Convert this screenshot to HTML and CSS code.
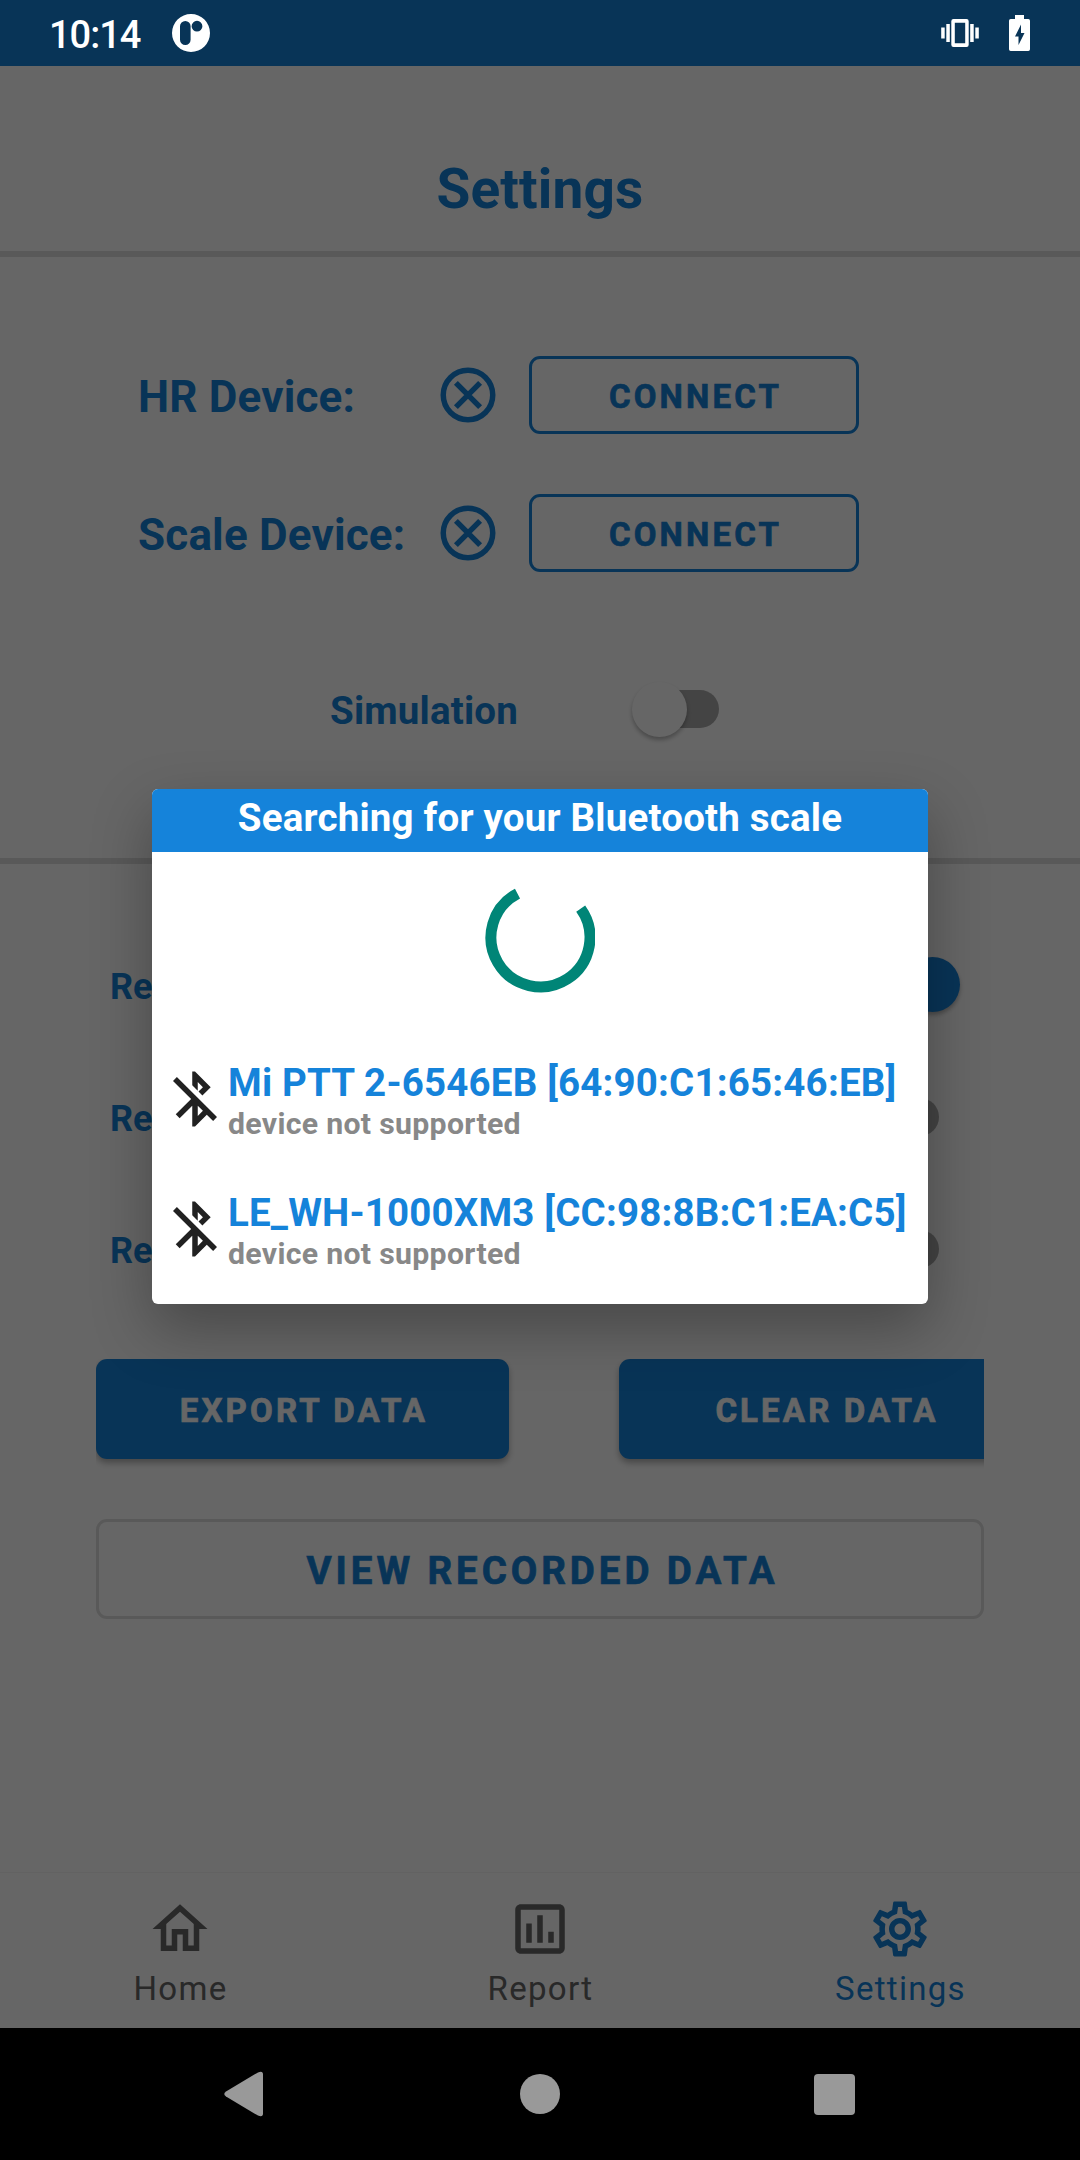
FILE: index.html
```html
<!DOCTYPE html>
<html lang="en">
<head>
<meta charset="utf-8">
<title>Settings</title>
<link rel="stylesheet" href="styles.css">
</head>
<body>
<div class="phone">
  <header class="status">
    <span class="clock">10:14</span>
    <svg class="app-mark" viewBox="0 0 38 38"><path fill="#fff" fill-rule="evenodd" d="M19 0a19 19 0 1 0 0 38a19 19 0 1 0 0-38zM13.3 7a5.3 5.3 0 0 1 5.3 5.3v13.4a5.3 5.3 0 0 1-10.6 0V12.300a5.300 5.300 0 0 1 5.300-5.300zM25 6.800a5.400 5.400 0 1 1 0 10.800a5.400 5.400 0 1 1 0-10.800z"/></svg>
    <svg class="vibrate" viewBox="0 0 40 30" fill="#fff"><rect x="1.200" y="9.500" width="3.500" height="11"/><rect x="6.300" y="6" width="3.500" height="18"/><path fill-rule="evenodd" d="M13.500 1h13a2.200 2.200 0 0 1 2.200 2.200v23.600a2.200 2.200 0 0 1-2.200 2.200h-13a2.200 2.200 0 0 1-2.200-2.200v-23.600A2.200 2.200 0 0 1 13.500 1zM14.800 4.700v20.600h10.400V4.700z"/><rect x="30.200" y="6" width="3.500" height="18"/><rect x="35.300" y="9.500" width="3.500" height="11"/></svg>
    <svg class="battery" viewBox="0 0 21 36"><path fill="#fff" fill-rule="evenodd" d="M6 0h9v4h4.300q1.700 0 1.700 1.700v28.600q0 1.700-1.700 1.700H1.700Q0 36 0 34.300V5.700Q0 4 1.700 4H6zM12 9.500L6 21.500h3.500v8.500L15.500 18H12z"/></svg>
  </header>

  <main class="app">
    <div class="title-bar"><h1>Settings</h1></div>

    <section class="devices">
      <div class="device-row">
        <span class="device-label">HR Device:</span>
        <svg class="icon24" viewBox="0 0 24 24" fill="none" stroke="currentColor" stroke-width="2"><circle cx="12" cy="12" r="9"/><path d="M7.600 7.600l8.800 8.800M16.400 7.600l-8.800 8.800"/></svg>
        <button class="btn outline">CONNECT</button>
      </div>
      <div class="device-row">
        <span class="device-label">Scale Device:</span>
        <svg class="icon24" viewBox="0 0 24 24" fill="none" stroke="currentColor" stroke-width="2"><circle cx="12" cy="12" r="9"/><path d="M7.600 7.600l8.800 8.800M16.400 7.600l-8.800 8.800"/></svg>
        <button class="btn outline">CONNECT</button>
      </div>
      <div class="simulation">
        <span class="sim-label">Simulation</span>
        <span class="switch"><span class="thumb"></span></span>
      </div>
    </section>

    <section class="records">
      <div class="record-row"><span class="record-label">Re</span><span class="switch on"><span class="thumb"></span></span></div>
      <div class="record-row"><span class="record-label">Re</span><span class="switch"><span class="thumb"></span></span></div>
      <div class="record-row"><span class="record-label">Re</span><span class="switch"><span class="thumb"></span></span></div>
      <div class="actions">
        <button class="btn filled">EXPORT DATA</button>
        <button class="btn filled">CLEAR DATA</button>
      </div>
      <button class="btn view">VIEW RECORDED DATA</button>
    </section>

    <nav class="tabs">
      <div class="tab">
        <svg class="icon24" viewBox="0 0 24 24" fill="currentColor"><path d="M12 5.690l5 4.500V18h-2v-6H9v6H7v-7.810l5-4.500M12 3L2 12h3v8h6v-6h2v6h6v-8h3L12 3z"/></svg>
        <span>Home</span>
      </div>
      <div class="tab">
        <svg class="icon24" viewBox="0 0 24 24" fill="currentColor"><path d="M19 3H5c-1.100 0-2 .9-2 2v14c0 1.100.9 2 2 2h14c1.100 0 2-.9 2-2V5c0-1.100-.9-2-2-2zm0 16H5V5h14v14zM7 10h2v7H7zm4-3h2v10h-2zm4 6h2v4h-2z"/></svg>
        <span>Report</span>
      </div>
      <div class="tab active">
        <svg class="icon24" viewBox="0 0 24 24" fill="currentColor"><path d="M19.430 12.980c.04-.32.070-.64.070-.98 0-.34-.03-.66-.07-.98l2.110-1.650c.19-.15.24-.42.120-.64l-2-3.460c-.09-.16-.26-.25-.44-.25-.06 0-.12.010-.17.030l-2.490 1c-.52-.4-1.080-.73-1.690-.98l-.38-2.650C14.460 2.180 14.250 2 14 2h-4c-.25 0-.46.180-.49.420l-.38 2.650c-.61.250-1.170.590-1.690.980l-2.490-1c-.06-.02-.12-.03-.18-.03-.17 0-.34.090-.43.250l-2 3.460c-.13.220-.07.490.120.640l2.110 1.650c-.04.320-.07.650-.07.980 0 .330.030.660.070.980l-2.110 1.650c-.19.150-.24.420-.12.640l2 3.460c.09.160.26.250.440.250.06 0 .120-.01.170-.03l2.490-1c.52.400 1.080.730 1.690.980l.38 2.650c.03.240.240.420.490.420h4c.25 0 .460-.18.490-.42l.38-2.650c.61-.25 1.170-.59 1.690-.98l2.490 1c.06.020.120.030.180.030.17 0 .340-.09.430-.25l2-3.460c.12-.22.070-.49-.12-.64l-2.110-1.650zM17.450 11.270c.04.310.050.520.050.730 0 .210-.02.430-.05.730l-.14 1.130.89.700 1.080.840-.7 1.210-1.270-.51-1.040-.42-.9.680c-.43.320-.84.560-1.250.730l-1.060.430-.16 1.130-.2 1.350h-1.400l-.19-1.350-.16-1.130-1.060-.43c-.43-.18-.83-.41-1.230-.71l-.91-.7-1.060.430-1.270.510-.7-1.210 1.080-.84.890-.7-.14-1.130c-.03-.31-.05-.54-.05-.74s.02-.43.050-.73l.14-1.130-.89-.7-1.080-.84.700-1.210 1.270.510 1.040.420.900-.68c.43-.32.840-.56 1.250-.73l1.060-.43.160-1.130.2-1.350h1.390l.19 1.350.160 1.130 1.060.430c.43.180.830.410 1.230.710l.91.700 1.060-.43 1.270-.51.700 1.210-1.070.850-.89.700.14 1.130zM12 8c-2.210 0-4 1.790-4 4s1.790 4 4 4 4-1.790 4-4-1.790-4-4-4zm0 6c-1.100 0-2-.9-2-2s.9-2 2-2 2 .9 2 2-.9 2-2 2z" fill-rule="evenodd"/></svg>
        <span>Settings</span>
      </div>
    </nav>

    <div class="scrim">
      <div class="dialog">
        <h2>Searching for your Bluetooth scale</h2>
        <svg class="spinner" viewBox="0 0 110 110"><path d="M95.700 25.600A49.500 49.500 0 1 1 32.500 10.600" fill="none" stroke="#008577" stroke-width="11"/></svg>
        <ul class="found">
          <li>
            <svg class="icon24" viewBox="0 0 24 24" fill="currentColor"><path d="M13 5.830l1.880 1.880-1.600 1.600 1.410 1.410 3.020-3.020L12 2h-1v5.030l2 2v-3.200zM5.410 4L4 5.410 10.590 12 5 17.590 6.410 19 11 14.410V22h1l4.290-4.290 2.300 2.290L20 18.590 5.410 4zM13 18.170v-3.760l1.880 1.880L13 18.170z"/></svg>
            <div><p class="name">Mi PTT 2-6546EB [64:90:C1:65:46:EB]</p><p class="note">device not supported</p></div>
          </li>
          <li>
            <svg class="icon24" viewBox="0 0 24 24" fill="currentColor"><path d="M13 5.830l1.880 1.880-1.600 1.600 1.410 1.410 3.020-3.020L12 2h-1v5.030l2 2v-3.200zM5.410 4L4 5.410 10.590 12 5 17.590 6.410 19 11 14.410V22h1l4.290-4.290 2.300 2.290L20 18.590 5.410 4zM13 18.170v-3.760l1.880 1.880L13 18.170z"/></svg>
            <div><p class="name">LE_WH-1000XM3 [CC:98:8B:C1:EA:C5]</p><p class="note">device not supported</p></div>
          </li>
        </ul>
      </div>
    </div>
  </main>

  <footer class="sysnav">
    <svg class="back" viewBox="0 0 40 46"><path fill="#999" d="M2 20.500L34 1.400Q39 -.5 39 3.500V42.500Q39 46.500 34 44.600L2 25.500Q-1.500 23 2 20.500z"/></svg>
    <span class="home"></span>
    <span class="recent"></span>
  </footer>
</div>
</body>
</html>
```
FILE: styles.css
```css
* { box-sizing: border-box; }
body { margin: 0; font-family: Roboto, sans-serif; }
h1, h2, p, ul { margin: 0; padding: 0; }
button { font-family: inherit; }

.phone { width: 1080px; height: 2160px; display: flex; flex-direction: column; overflow: hidden; }

.status { height: 66px; background: #083457; display: flex; align-items: center; padding: 0 50px 0 49px; flex: none; }
.clock { color: #fff; font-size: 38px; font-weight: 500; line-height: 40px; width: 123px; letter-spacing: -1px; padding-top: 3px; }
.app-mark { width: 38px; height: 38px; }
.vibrate { width: 40px; height: 30px; margin-left: auto; }
.battery { width: 21px; height: 36px; margin-left: 29px; }

.app { position: relative; flex: 1; min-height: 0; background: #fff; color: #1583da; display: flex; flex-direction: column; }
.icon24 { width: 66px; height: 66px; flex: none; display: block; }

.title-bar { height: 191px; border-bottom: 6px solid #dedede; padding-top: 91px; text-align: center; }
.title-bar h1 { font-size: 55px; line-height: 64px; font-weight: 700; letter-spacing: 0.15px; }

.devices { height: 607px; border-bottom: 6px solid #dedede; padding-top: 99px; }
.device-row { height: 78px; margin-bottom: 60px; padding-left: 138px; display: flex; align-items: center; }
.device-label { width: 297px; font-size: 44px; font-weight: 700; padding-top: 4px; white-space: nowrap; letter-spacing: 0.18px; }
.btn { border: 0; padding: 2px 0 0 3px; font-size: 33px; font-weight: 700; letter-spacing: 3.15px; color: inherit; border-radius: 11px; background: none; white-space: nowrap; -webkit-text-stroke: 0.7px currentColor; }
.outline { width: 330px; height: 78px; margin-left: 28px; border: 3px solid #1583da; }

.simulation { height: 56px; margin-top: 109px; padding: 0 361px 0 330px; display: flex; align-items: center; justify-content: space-between; font-size: 38.5px; font-weight: 700; letter-spacing: 0.18px; }
.sim-label { padding-top: 2px; }
.switch { width: 76px; height: 38px; border-radius: 19px; background: #aaa; display: flex; align-items: center; flex: none; }
.thumb { width: 55px; height: 55px; border-radius: 50%; background: #fff; margin-left: -11px; flex: none; box-shadow: 0 3px 4px rgba(0,0,0,.28); }
.switch.on { background: #8ac1ed; }
.switch.on .thumb { background: #1583da; margin-left: 42px; }

.records { flex: 1; padding: 55px 96px 0; }
.record-row { height: 132px; padding: 0 45px 0 14px; display: flex; align-items: center; justify-content: space-between; font-size: 36px; font-weight: 700; }
.record-label { padding-top: 3px; }
.record-row .switch { margin-bottom: 1px; }
.actions { margin-top: 44px; height: 120px; display: flex; gap: 110px; overflow: hidden; }
.filled { width: 413px; height: 100px; flex: none; background: #1583da; color: #fff; box-shadow: 0 4px 6px rgba(0,0,0,.3); }
.view { display: block; width: 888px; height: 100px; margin-top: 40px; border: 3px solid #dedede; font-size: 38.5px; letter-spacing: 3.93px; padding-left: 5px; }

.tabs { height: 155px; display: flex; color: #666; flex: none; box-shadow: 0 -1px 1px rgba(0,0,0,.04); }
.tab { flex: 1; display: flex; flex-direction: column; align-items: center; padding-top: 23px; font-size: 33px; line-height: 40px; letter-spacing: 1.3px; }
.tab span { margin-top: 7px; padding-left: 1px; }
.active { color: #1583da; }

.scrim { position: absolute; inset: 0; background: rgba(0,0,0,.6); padding: 723px 152px 0; }
.dialog { height: 515px; background: #fff; border-radius: 6px; overflow: hidden; box-shadow: 0 24px 60px rgba(0,0,0,.3); }
.dialog h2 { height: 63px; line-height: 58px; background: #1583da; color: #fff; text-align: center; font-size: 38.5px; font-weight: 700; letter-spacing: 0.2px; }
.spinner { display: block; width: 110px; height: 110px; margin: 31px auto 0; }
.found { list-style: none; padding: 67px 0 0 10px; }
.found li { height: 130px; display: flex; color: #212121; }
.found .icon24 { margin-top: 6px; }
.name { color: #1583da; font-size: 38.5px; line-height: 45px; font-weight: 700; white-space: nowrap; letter-spacing: 0.18px; }
.note { color: #888; font-size: 30.25px; line-height: 38px; font-weight: 700; letter-spacing: 0.3px; }

.sysnav { height: 132px; background: #000; flex: none; display: flex; align-items: center; padding-left: 224px; }
.back { width: 40px; height: 46px; }
.home { width: 40px; height: 40px; border-radius: 50%; background: #999; margin-left: 256px; }
.recent { width: 41px; height: 41px; border-radius: 4px; background: #999; margin-left: 254px; }
```
